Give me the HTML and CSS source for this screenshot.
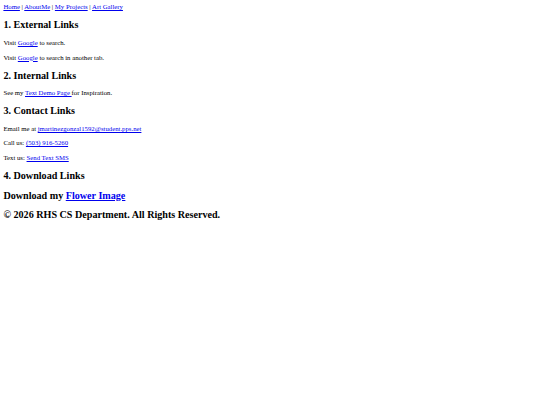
FILE: index.html
```html
<!DOCTYPE html>
<html lang="en">
<head>
    <meta charset="UTF-8">
    <meta name="viewport" content="width=device-width, initial-scale=1.0">
    <title>My Links</title>
    <link rel="stylesheet" href="styles.css">
</head>
<body>
    <nav class="top-nav">
        <a href="index.html">Home</a> |
        <a href="aboutme.html">AboutMe</a> |
        <a href="projects.html">My Projects</a> |
        <a href="gallery.html">Art Gallery</a>
    </nav>

    <h2>1. External Links</h2>
    <p>Visit <a href="https://www.google.com">Google</a> to search.</p>
    <p>Visit <a href="https://www.google.com" target="_blank">Google</a> to search in another tab.</p>

    <h2>2. Internal Links</h2>
    <p>See my <a href="text-demo.html">Text Demo Page </a>for Inspiration.</p>

    <h2>3. Contact Links</h2>
    <p>Email me at <a href="mailto:jmartinezgonzal1592@student.pps.net">jmartinezgonzal1592@student.pps.net</a></p>
    <p>Call us: <a href="tel:5039165260">(503) 916-5260</a></p>
    <p>Text us: <a href="sms:5039165260">Send Text SMS</a></p>

    <h2>4. Download Links</h2>
    <h2>Download my <a href="flower.jpg" download>Flower Image</a></h2>

    <h2 class="footer">&copy; 2026 RHS CS Department. All Rights Reserved.</h2>
</body>
</html>
```

FILE: styles.css
```css
body {
    font-family: "Liberation Serif", "Times New Roman", serif;
    font-size: 6.75px;
    line-height: 7.6px;
    margin: 3.4px;
    color: #000;
}
a {
    color: #0000ee;
}
p {
    margin: 6.75px 0;
}
h2 {
    font-size: 10.125px;
    line-height: 11.4px;
    margin: 8.4px 0;
}
```
